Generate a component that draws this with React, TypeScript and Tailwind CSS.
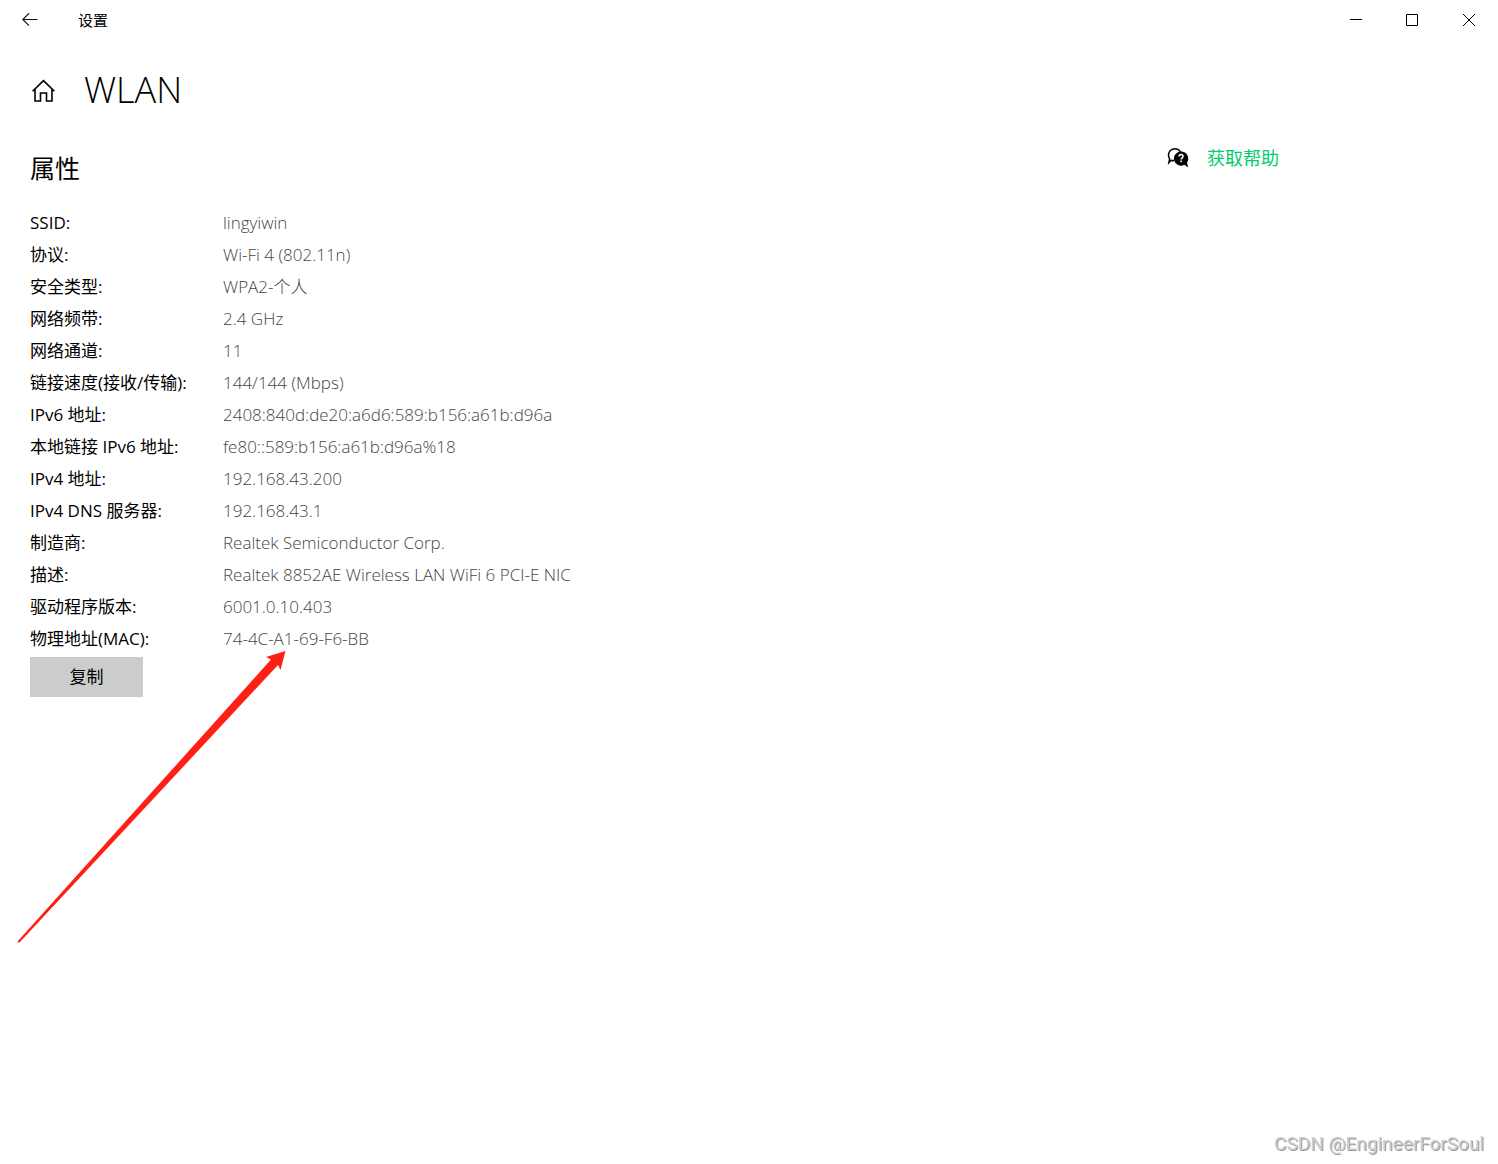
interface Property {
  label: string;
  value: string;
}

const PROPERTIES: Property[] = [
  { label: 'SSID:', value: 'lingyiwin' },
  { label: '协议:', value: 'Wi-Fi 4 (802.11n)' },
  { label: '安全类型:', value: 'WPA2-个人' },
  { label: '网络频带:', value: '2.4 GHz' },
  { label: '网络通道:', value: '11' },
  { label: '链接速度(接收/传输):', value: '144/144 (Mbps)' },
  { label: 'IPv6 地址:', value: '2408:840d:de20:a6d6:589:b156:a61b:d96a' },
  { label: '本地链接 IPv6 地址:', value: 'fe80::589:b156:a61b:d96a%18' },
  { label: 'IPv4 地址:', value: '192.168.43.200' },
  { label: 'IPv4 DNS 服务器:', value: '192.168.43.1' },
  { label: '制造商:', value: 'Realtek Semiconductor Corp.' },
  { label: '描述:', value: 'Realtek 8852AE Wireless LAN WiFi 6 PCI-E NIC' },
  { label: '驱动程序版本:', value: '6001.0.10.403' },
  { label: '物理地址(MAC):', value: '74-4C-A1-69-F6-BB' },
];

function TitleBar() {
  return (
    <header className="flex h-10 items-center justify-between">
      <div className="flex h-full items-center">
        <button aria-label="返回" className="flex h-full w-15 items-center justify-center">
          <svg width="16" height="14" viewBox="0 0 16 14" fill="none" stroke="#111" strokeWidth="1.1">
            <path d="M15.5 6.5H1M7 .3.8 6.5 7 12.7" />
          </svg>
        </button>
        <span className="pl-4.5 text-[15px] leading-5 font-normal">设置</span>
      </div>
      <div className="flex h-full">
        <button aria-label="最小化" className="flex w-14 items-center justify-center">
          <svg width="12" height="12" viewBox="0 0 12 12" stroke="#000">
            <path d="M0 5.5h12" />
          </svg>
        </button>
        <button aria-label="最大化" className="flex w-14 items-center justify-center">
          <svg width="12" height="12" viewBox="0 0 12 12" fill="none" stroke="#000">
            <path d="M.5.5h11v11H.5z" />
          </svg>
        </button>
        <button aria-label="关闭" className="flex w-14.5 items-center justify-center">
          <svg width="12" height="12" viewBox="0 0 12 12" fill="none" stroke="#000">
            <path d="m0 0 12 12M12 0 0 12" />
          </svg>
        </button>
      </div>
    </header>
  );
}

function HomeIcon() {
  return (
    <svg width="24" height="24" viewBox="0 0 24 24" fill="none" stroke="#000" strokeWidth="1.6">
      <path d="M.6 12.2 11.5 1.6l10.9 10.6M3 10v12h5.5v-8h6v8H20V10" />
    </svg>
  );
}

function HelpIcon() {
  return (
    <svg width="22" height="20" viewBox="0 0 22 20">
      <path
        d="M7 12.8c-1 .1-2-.1-2.9-.5l-2.2 2.4.7-4a6.3 6.3 0 0 1-1.1-3.8C1.5 3.4 4.3.8 7.8.8c2.5 0 4.7 1.3 5.8 3.5"
        fill="none"
        stroke="#000"
        strokeWidth="1.5"
      />
      <path
        d="M14.1 3.5a7.1 7.1 0 1 0 3.3 13.3l3.8 2.6-1.2-4.8a7.1 7.1 0 0 0-5.9-11.1z"
        fill="#000"
      />
      <path
        d="M12 8.5c0-1.2.8-1.9 2-1.9s2 .8 2 1.8c0 1.4-1.9 1.5-1.9 3.2M14.1 12.6v1.6"
        fill="none"
        stroke="#fff"
        strokeWidth="1.5"
      />
    </svg>
  );
}

function PointerArrow() {
  return (
    <svg
      className="pointer-events-none absolute top-[651px] left-[17px]"
      width="270"
      height="293"
      viewBox="0 0 270 293"
      aria-hidden="true"
    >
      <path d="M268.5 0 249 6l5 2.5-253.5 282L2 292 261 14l2.5 5z" fill="#ff1f14" />
    </svg>
  );
}

export default function App() {
  return (
    <div className="relative flex min-h-screen flex-col bg-white font-['Open_Sans','Noto_Sans_CJK_SC',sans-serif] font-light text-black">
      <TitleBar />

      <div className="flex items-center gap-7 pt-6 pl-8">
        <a href="#home" aria-label="主页" className="pt-0.5">
          <HomeIcon />
        </a>
        <h1 className="text-4xl leading-13">WLAN</h1>
      </div>

      <main className="flex justify-between pt-7 pl-7.5">
        <section>
          <h2 className="text-[25px] leading-12 font-normal">属性</h2>
          <table className="mt-[15px] text-left text-[17px] leading-8">
            <tbody>
              {PROPERTIES.map(({ label, value }) => (
                <tr key={label}>
                  <th scope="row" className="w-[193px] p-0 font-normal whitespace-nowrap">
                    {label}
                  </th>
                  <td className="p-0 whitespace-nowrap text-[#444]">{value}</td>
                </tr>
              ))}
            </tbody>
          </table>
          <button className="mt-0.5 h-10 w-[113px] bg-[#ccc] text-[17px] font-normal">复制</button>
        </section>

        <aside className="w-[331px]">
          <a href="#help" className="flex items-center gap-4.5 text-lg leading-7 font-normal text-[#00cc6a]">
            <HelpIcon />
            获取帮助
          </a>
        </aside>
      </main>

      <footer className="mt-auto pr-3.5 pb-2 text-right font-[Roboto,sans-serif] text-[19px] leading-6 font-normal text-[#ccc] text-shadow-[1px_1px_0_#999]">
        CSDN @EngineerForSoul
      </footer>

      <PointerArrow />
    </div>
  );
}
